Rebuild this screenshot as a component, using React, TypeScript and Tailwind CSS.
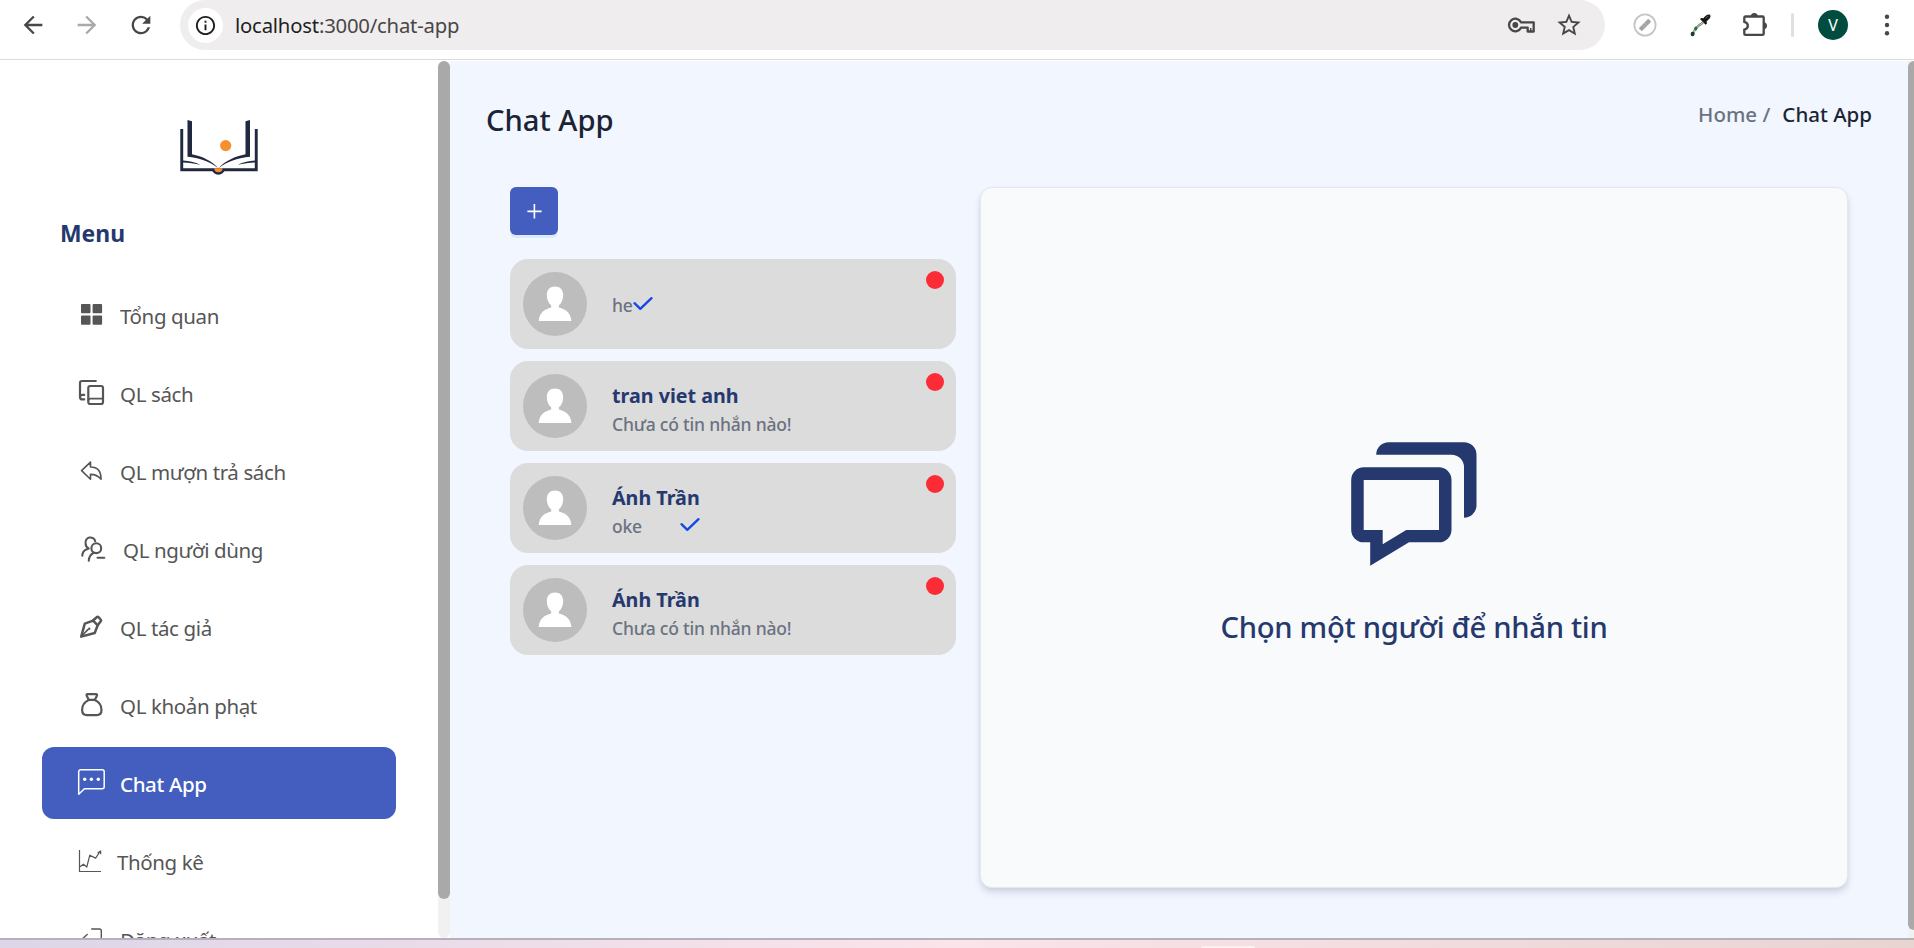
import type { ReactNode } from "react";
import { IoArrowUndoOutline } from "react-icons/io5";
import { MdArrowBack, MdArrowForward, MdOutlineInfo, MdRefresh, MdStarBorder } from "react-icons/md";

const icons: Record<string, ReactNode> = {
  overview: (
    <g fill="currentColor" stroke="none">
      <rect x="5" y="7" width="9.5" height="9.3" rx="1" />
      <rect x="16.6" y="7" width="9.5" height="9.3" rx="1" />
      <rect x="5" y="18.5" width="9.5" height="9.3" rx="1" />
      <rect x="16.6" y="18.5" width="9.5" height="9.3" rx="1" />
    </g>
  ),
  books: (
    <g strokeWidth="2.2">
      <path d="M19.8 6H6a2 2 0 0 0-2 2v14.3a2.3 2.3 0 0 0 2.3 2.1h1.9M4.2 21.6a2.1 2.1 0 0 1 2-1.7h2" />
      <path d="M14.2 11H25a2 2 0 0 1 2 2v14a2 2 0 0 1-2 2H14.3a2 2 0 0 1-2-2V13a2 2 0 0 1 1.9-2Z" />
      <path d="M12.4 25.5a2 2 0 0 1 2-1.8H27" strokeWidth="1.8" />
    </g>
  ),
  undo: <IoArrowUndoOutline x={2.3} y={4.7} size={26} />,
  users: (
    <g strokeWidth="2.1">
      <circle cx="20.3" cy="17.2" r="4.9" />
      <path d="M12.8 29.7c.1-4 1.8-6.400 5-8M21.500 26.700h6.800M6.300 24.700c.1-3.200 1.700-5.200 4-6.200l2.400-1c-2-1-3.100-2.800-3.100-5a4.900 4.900 0 0 1 9.600-2.200" />
    </g>
  ),
  pen: (
    <g strokeWidth="2.5">
      <path d="m5.2 27.600 3.600-13 8.300-3 4.600 4.700-3 7.700Z" />
      <path d="m17 11.500 3.700-3.300a1.300 1.300 0 0 1 1.800 0l2.200 2.300a1.300 1.300 0 0 1 0 1.800l-3 4" />
      <path d="m5.500 27.200 6.400-6.600" strokeWidth="1.600" />
      <circle cx="13.200" cy="19.800" r="1.200" fill="currentColor" stroke="none" />
    </g>
  ),
  bag: (
    <g strokeWidth="2.2">
      <path d="M11.400 7.200h8.800a.9.9 0 0 1 .8 1.300l-2.200 4.400h-6l-2.200-4.400a.9.9 0 0 1 .8-1.300Z" />
      <path d="M12.800 12.900C8.600 14.700 6.100 18.800 6.100 23c0 3.200 1.900 5.100 4.900 5.100h9.600c3 0 4.900-1.900 4.900-5.100 0-4.200-2.500-8.300-6.700-10.100" />
    </g>
  ),
  chat: (
    <g strokeWidth="1.5">
      <path d="M2.700 29.200V6.700a2 2 0 0 1 2-2h21.500a2 2 0 0 1 2 2v15a2 2 0 0 1-2 2H8.400Z" />
      <g fill="currentColor" stroke="none">
        <circle cx="8.700" cy="14.300" r="1.700" />
        <circle cx="15.400" cy="14.300" r="1.700" />
        <circle cx="22.300" cy="14.300" r="1.700" />
      </g>
    </g>
  ),
  chart: (
    <g strokeWidth="1.2" strokeLinecap="butt">
      <path d="M3.500 7v21.500H25" />
      <path d="m4 23.800 3.400-2.600 3.400 2.800 3-11.800 5.800 2.900 4.400-6.600M21.600 9.900l3-2 .1 3.300" />
    </g>
  ),
  logout: (
    <g strokeWidth="1.4">
      <path d="M15.700 8h7.800a1.800 1.800 0 0 1 1.800 1.800v17M11.200 13.400 5 19.200l6.200 6M5 19.200h13" />
    </g>
  ),
};

const menu = [
  { icon: "overview", label: "Tổng quan", pad: "pl-[8px]" },
  { icon: "books", label: "QL sách", pad: "pl-[8px]" },
  { icon: "undo", label: "QL mượn trả sách", pad: "pl-[8px]" },
  { icon: "users", label: "QL người dùng", pad: "pl-[11px]" },
  { icon: "pen", label: "QL tác giả", pad: "pl-[8px]" },
  { icon: "bag", label: "QL khoản phạt", pad: "pl-[8px]" },
  { icon: "chat", label: "Chat App", pad: "pl-[8px]", active: true },
  { icon: "chart", label: "Thống kê", pad: "pl-[5px]" },
  { icon: "logout", label: "Đăng xuất", pad: "pl-[8px]" },
];

const chats = [
  { name: "", message: "he", seen: "tight" },
  { name: "tran viet anh", message: "Chưa có tin nhắn nào!", seen: "" },
  { name: "Ánh Trần", message: "oke", seen: "spread" },
  { name: "Ánh Trần", message: "Chưa có tin nhắn nào!", seen: "" },
];

function Toolbar() {
  return (
    <header className="flex h-[60px] shrink-0 items-start border-b border-[#dcdcdc] bg-white pl-[19px] text-[#474747]">
      <div className="flex h-[50px] shrink-0 items-center">
        <MdArrowBack className="size-[28px]" />
        <MdArrowForward className="ml-[26px] size-[28px] text-[#a9a9a9]" />
        <MdRefresh className="ml-[26px] size-[28px]" />
      </div>
      <div className="ml-[25px] flex h-[50px] w-[1425px] shrink-0 items-center rounded-full bg-[#efedee] pr-[22px] pl-[8px]">
        <div className="flex size-[35px] items-center justify-center rounded-full bg-white text-[#1f1f1f]">
          <MdOutlineInfo className="size-[23px]" />
        </div>
        <div className="ml-[12px] text-[20.3px] tracking-[-0.2px] text-[#474747]">
          <span className="text-[#1f1f1f]">localhost</span>:3000/chat-app
        </div>
        <svg className="ml-auto h-[24px] w-[29px]" viewBox="0 0 29 24" fill="none" stroke="currentColor" strokeWidth="2.3">
          <path d="M14 9.300A6.300 6.300 0 1 0 14 14.700H20.700V18.500H26.700V9.300Z" strokeLinejoin="round" />
          <path d="M23.700 15v3" strokeWidth="1.400" />
          <circle cx="8.300" cy="12" r="2.900" fill="currentColor" stroke="none" />
        </svg>
        <MdStarBorder className="ml-[19px] size-[28px]" />
      </div>
      <div className="flex h-[50px] shrink-0 items-center">
        <svg className="ml-[28px] size-[24px]" viewBox="0 0 24 24">
          <circle cx="12" cy="12" r="10.600" fill="none" stroke="#c6c6c6" strokeWidth="1.800" />
          <path d="M7.300 16.700 16.700 7.300" stroke="#a3a3a3" strokeWidth="4.200" />
          <path d="m10 12.300 1.200 1.200M12 10.300l1.200 1.200" stroke="#d4d4d4" strokeWidth=".8" />
        </svg>
        <svg className="ml-[32px] size-[24px]" viewBox="0 0 24 24">
          <path d="M14 9.500C9 13 5.500 15.500 4 21" fill="none" stroke="#6c7a6c" strokeWidth="2.200" />
          <path d="M14 9.500C9 13 6 15.500 4.500 20" fill="none" stroke="#e5ece5" strokeWidth=".8" />
          <ellipse cx="3.600" cy="21" rx="2" ry="2.300" fill="#1d3b26" />
          <ellipse cx="6.800" cy="15.500" rx="1.600" ry="1.900" fill="#1f7a3a" />
          <path d="m11 6 1.400-1 2 .2C16 3 18 1.500 20 1.500c1.600 0 2 2 .9 3.600-.9 1.400-2.400 2.400-3.300 3.400l.4 2-1.400 1.200Z" fill="#151515" />
          <path d="m16.500 5 3-2" stroke="#777" strokeWidth=".9" />
        </svg>
        <svg className="mb-[2px] ml-[28px] size-[28px]" viewBox="0 0 28 28">
          <path
            d="M4.500 6.500h17a1.200 1.200 0 0 1 1.200 1.200v16a1.200 1.200 0 0 1-1.200 1.200h-17a1.200 1.200 0 0 1-1.200-1.200v-4.100c4.700-.8 4.700-6.700 0-7.700V7.700a1.200 1.200 0 0 1 1.200-1.200Z"
            fill="none"
            stroke="currentColor"
            strokeWidth="2.300"
          />
          <path d="M9.800 6.500a3.500 3.500 0 0 1 7 0ZM22.500 12.200a3.500 3.500 0 0 1 0 7Z" fill="currentColor" />
        </svg>
        <div className="ml-[22px] h-[24px] w-[3px] rounded-full bg-[#dfdfdf]" />
        <div className="ml-[24px] flex size-[30px] items-center justify-center rounded-full bg-[#004d40] text-[16px] text-white">V</div>
        <svg className="ml-[36px] h-[24px] w-[6px]" viewBox="0 0 6 24" fill="currentColor">
          <circle cx="3" cy="3.700" r="2.200" />
          <circle cx="3" cy="12" r="2.200" />
          <circle cx="3" cy="20.300" r="2.200" />
        </svg>
      </div>
    </header>
  );
}

function Logo() {
  return (
    <svg className="h-[58px] w-[80px]" viewBox="0 0 80 58">
      <g fill="#202940">
        <path d="M1.300 10h2.900v39.300h71.600V10h2.900v42.200H1.300Z" />
        <path d="M8.500 1 13 2.300v33c10.500 2.200 19.300 6.200 26.300 13.900C30 42 20 39 8.500 37.700Z" />
        <path d="M71 1 66.500 2.300v33C56 37.500 46.800 41.500 39.300 49.200 49 42 59.500 39 71 37.700Z" />
        <path d="M4 41.600c6 .4 11.500 1.800 17.500 4.200C15.500 44.600 10 43.800 4 43.600ZM76 41.600c-6 .4-11.500 1.800-17.500 4.200 6-1.200 11.500-2 17.500-2.200Z" />
        <path d="M32.600 50h13.500a6.800 6.500 0 0 1-13.500 0Z" />
      </g>
      <path d="M35.300 49.300h8.200a4.100 4 0 0 1-8.200 0Z" fill="#f5902e" />
      <circle cx="46.700" cy="26.600" r="5.600" fill="#f5902e" />
    </svg>
  );
}

function Sidebar() {
  return (
    <aside className="flex w-[450px] shrink-0 overflow-hidden bg-white">
      <div className="flex w-[438px] shrink-0 flex-col">
        <div className="mt-[58px] flex h-[58px] shrink-0 justify-center">
          <Logo />
        </div>
        <h2 className="mt-[40px] ml-[60px] h-[34px] shrink-0 text-[22.900px] leading-[34px] font-bold text-[#25396f]">Menu</h2>
        <nav className="mt-[28px] ml-[42px] flex w-[354px] flex-col gap-[6px]">
          {menu.map((item) => (
            <a
              key={item.label}
              className={`flex h-[72px] shrink-0 items-center rounded-xl pl-[34px] ${
                item.active ? "bg-[#435ebe] font-medium text-white" : "text-[#565656]"
              }`}
            >
              <svg
                className="size-[36px] shrink-0"
                viewBox="0 0 36 36"
                fill="none"
                stroke="currentColor"
                strokeLinecap="round"
                strokeLinejoin="round"
              >
                {icons[item.icon]}
              </svg>
              <span className={`${item.pad} pt-[3px] text-[20.500px] tracking-[-0.38px] whitespace-nowrap`}>{item.label}</span>
            </a>
          ))}
        </nav>
      </div>
      <div className="w-[12px] rounded-full bg-[#f1f1f1]">
        <div className="h-[838px] rounded-full bg-[#a9a9a9]" />
      </div>
    </aside>
  );
}

function Avatar() {
  return (
    <svg className="size-[64px] shrink-0" viewBox="0 0 64 64">
      <circle cx="32" cy="32" r="32" fill="#bdbdbd" />
      <path
        d="M32 14.500c5 0 8.200 3.300 8.200 8.500 0 4.500-1.600 8.300-4.300 10.300v2.200c6.800 1.700 11.800 5 12.500 13.600H15.700c.7-8.600 5.700-11.900 12.500-13.600v-2.200c-2.800-2-4.400-5.800-4.400-10.300 0-5.200 3.200-8.500 8.200-8.500Z"
        fill="#fff"
      />
    </svg>
  );
}

function Check() {
  return (
    <svg className="mb-[2px] h-[14px] w-[20px] shrink-0" viewBox="0 0 20 14" fill="none" stroke="#1447e6" strokeWidth="2.300">
      <path d="m1.500 6.200 5.800 5.600L18.500 1.200" strokeLinecap="round" strokeLinejoin="round" />
    </svg>
  );
}

function ChatList() {
  return (
    <section className="w-[446px] shrink-0">
      <button className="flex size-[48px] items-center justify-center rounded-md bg-[#435ebe] shadow-[0_3px_0_#dbeafe]">
        <svg className="size-[16px]" viewBox="0 0 16 16" stroke="#fff" strokeWidth="1.600">
          <path d="M8.400 1v14.500M1.400 8.400h14.200" />
        </svg>
      </button>
      <ul className="mt-[24px] flex flex-col gap-[12px]">
        {chats.map((chat, i) => (
          <li key={i} className="flex h-[90px] items-center rounded-[18px] bg-[#dcdcdc] pr-[12px] pl-[13px]">
            <Avatar />
            <div className={`ml-[25px] flex flex-col ${chat.name ? "pt-[8px]" : "pt-[2px]"}`}>
              {chat.name && <div className="h-[28px] text-[19.700px] leading-[28px] font-bold text-[#25396f]">{chat.name}</div>}
              <div
                className={`flex h-[28px] items-center text-[17.500px] leading-[28px] font-medium tracking-[-0.2px] text-[#6b7280] ${
                  chat.seen === "spread" ? "justify-between" : ""
                }`}
              >
                <span>{chat.message}</span>
                {chat.seen && <Check />}
              </div>
            </div>
            <span className="mt-[12px] ml-auto size-[18px] self-start rounded-full bg-[#fb2c36]" />
          </li>
        ))}
      </ul>
    </section>
  );
}

function EmptyConversation() {
  return (
    <section className="ml-[24px] flex h-[701px] w-[868px] shrink-0 flex-col items-center rounded-xl border border-[#e5e7eb] bg-[#f9fafc] pt-[254px] shadow-[0_5px_8px_-1px_rgba(20,30,70,0.14),0_2px_5px_-1px_rgba(20,30,70,0.08)]">
      <svg className="h-[124px] w-[126px]" viewBox="0 0 126 124" fill="#25396f">
        <path d="M25.200 12.700A12.500 12.500 0 0 1 37.700.2H113a12.500 12.500 0 0 1 12.500 12.500V63A12.500 12.500 0 0 1 113 75.700V25.200a12.500 12.500 0 0 0-12.500-12.500Z" />
        <path
          fillRule="evenodd"
          d="M12.700 25.300H88a12.500 12.500 0 0 1 12.500 12.500v50A12.500 12.500 0 0 1 88 100.300H58L19.200 123.700V100.300H12.700A12.500 12.500 0 0 1 .2 87.800v-50a12.500 12.500 0 0 1 12.500-12.500ZM12.700 38v50h19v14.300L55.200 88H88V38Z"
        />
      </svg>
      <p className="mt-[40px] text-[29.200px] leading-[42px] font-medium tracking-[-0.3px] text-[#25396f]">Chọn một người để nhắn tin</p>
    </section>
  );
}

export default function App() {
  return (
    <div className="flex h-[948px] w-[1914px] flex-col overflow-hidden bg-white font-['Noto_Sans','Open_Sans',sans-serif]">
      <Toolbar />
      <div className="mt-px flex h-[877px] shrink-0 overflow-hidden">
        <Sidebar />
        <main className="w-[1458px] shrink-0 bg-[#f1f6ff] pr-[36px] pl-[36px]">
          <div className="flex h-[126px] justify-between">
            <h1 className="mt-[39px] text-[29.200px] leading-[40px] font-medium text-[#1c2434]">Chat App</h1>
            <div className="mt-[38px] flex gap-[12px] text-[20.500px] leading-[30px] font-medium">
              <span className="text-[#6b7280]">Home /</span>
              <span className="text-[#1c2434]">Chat App</span>
            </div>
          </div>
          <div className="flex pl-[24px]">
            <ChatList />
            <EmptyConversation />
          </div>
        </main>
        <div className="w-[6px] bg-[#f1f1f1]">
          <div className="h-[869px] rounded-l-full bg-[#a9a9a9]" />
        </div>
      </div>
      <footer className="flex h-[10px] shrink-0 items-end border-t-2 border-[#b7afb9] bg-linear-to-r from-[#dcd6e8] via-[#fbe4ea] to-[#e8d4d1] pl-[1201px]">
        <div className="h-[2px] w-[54px] rounded-t-sm bg-[#fbf1f1]" />
      </footer>
    </div>
  );
}
